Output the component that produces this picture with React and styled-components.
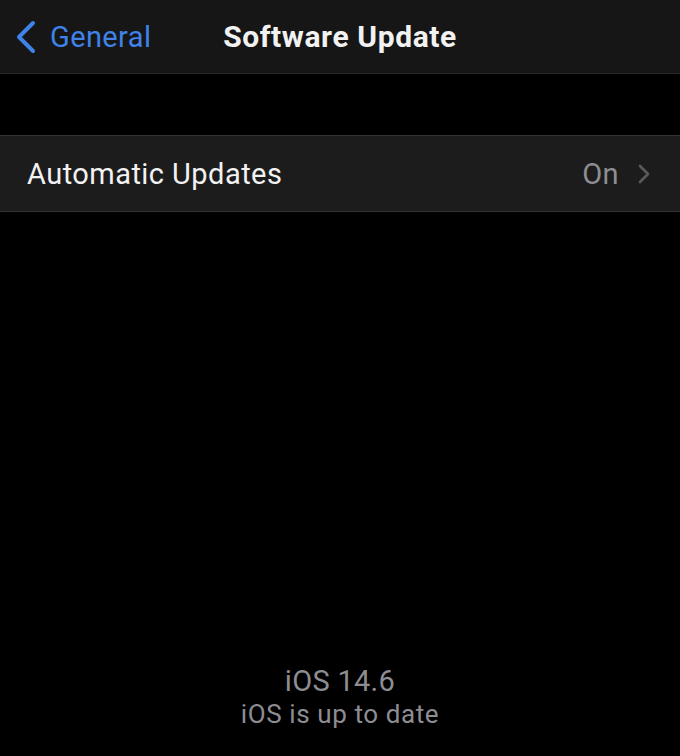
import React from "react";
import styled, { createGlobalStyle } from "styled-components";

const Global = createGlobalStyle`
  html, body { margin: 0; padding: 0; background: #000; }
  body { font-family: Roboto, "Noto Sans", sans-serif; -webkit-font-smoothing: antialiased; }
  #root { height: 756px; }
`;

const Page = styled.div`
  width: 680px;
  height: 756px;
  background: #000;
  display: flex;
  flex-direction: column;
  overflow: hidden;
`;

const NavBar = styled.header`
  height: 73px;
  background: #161616;
  border-bottom: 1px solid #262626;
  display: grid;
  grid-template-columns: 1fr auto 1fr;
  align-items: center;
`;

const BackButton = styled.div`
  display: flex;
  align-items: center;
  gap: 12px;
  padding-left: 14px;
  color: #3f82e8;
  font-size: 29px;
  letter-spacing: 0.4px;
`;

const Title = styled.h1`
  margin: 0;
  color: #f2f2f2;
  font-size: 30px;
  font-weight: 700;
  letter-spacing: 0.6px;
`;

const Spacer = styled.div`
  height: 61px;
`;

const Row = styled.div`
  height: 75px;
  background: #1c1c1d;
  border-top: 1px solid #333335;
  border-bottom: 1px solid #333335;
  display: flex;
  align-items: center;
  padding: 0 30px 0 27px;
`;

const RowLabel = styled.span`
  flex: 1;
  color: #f2f2f2;
  font-size: 29px;
  letter-spacing: 0.45px;
`;

const RowValue = styled.span`
  color: #8d8d92;
  font-size: 29px;
  letter-spacing: 0.4px;
  margin-right: 19px;
`;

const Footer = styled.div`
  margin-top: auto;
  padding-bottom: 26px;
  display: flex;
  flex-direction: column;
  align-items: center;
  color: #8d8d92;
  line-height: 1.2;
`;

const Version = styled.div`
  font-size: 29px;
  letter-spacing: 0.3px;
`;

const Status = styled.div`
  font-size: 26px;
  letter-spacing: 0.6px;
`;

const BackChevron = () => (
  <svg width="24" height="34" viewBox="0 0 24 34" fill="none">
    <path d="M19 3 L5 17 L19 31" stroke="#3f82e8" strokeWidth="4" strokeLinecap="round" strokeLinejoin="round" />
  </svg>
);

const Disclosure = () => (
  <svg width="12" height="20" viewBox="0 0 12 20" fill="none">
    <path d="M2 2 L10 10 L2 18" stroke="#5a5a5e" strokeWidth="2.6" strokeLinecap="round" strokeLinejoin="round" />
  </svg>
);

export default function App() {
  return (
    <Page>
      <Global />
      <NavBar>
        <BackButton>
          <BackChevron />
          <span>General</span>
        </BackButton>
        <Title>Software Update</Title>
        <div />
      </NavBar>
      <Spacer />
      <Row>
        <RowLabel>Automatic Updates</RowLabel>
        <RowValue>On</RowValue>
        <Disclosure />
      </Row>
      <Footer>
        <Version>iOS 14.6</Version>
        <Status>iOS is up to date</Status>
      </Footer>
    </Page>
  );
}
